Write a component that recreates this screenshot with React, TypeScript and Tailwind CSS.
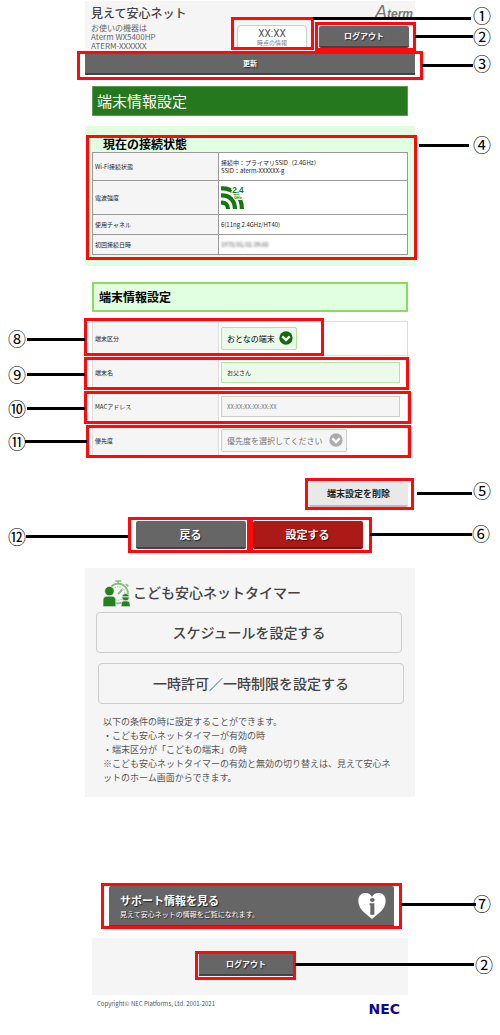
import { useState } from "react";
import type { ReactNode } from "react";

interface CalloutProps {
  mark: string;
  box: string;
  line: string;
  label: string;
}

interface StatusRow {
  name: string;
  height: string;
  value: ReactNode;
}

function Callout({ mark, box, line, label }: CalloutProps) {
  return (
    <div className="pointer-events-none">
      <div className={`absolute border-3 border-[#ff0a0a] ${box}`} />
      <div className={`absolute h-[3px] bg-black ${line}`} />
      <span
        className={`absolute w-[18px] text-center text-[18px] leading-4 text-black ${label}`}
      >
        {mark}
      </span>
    </div>
  );
}

function SignalIcon() {
  return (
    <svg
      width="23"
      height="23"
      viewBox="0 0 66 66"
      className="overflow-visible font-['Liberation_Sans',sans-serif] font-bold"
      role="img"
      aria-label="2.4GHz"
    >
      <g fill="none" stroke="#14780f" strokeWidth="12">
        <path d="M0 7C32 5 60 28 60 66" />
        <path d="M0 27C25 26 40 42 40 66" />
        <path d="M0 48C14 47 20 54 20 66" />
      </g>
      <g fill="#14780f" stroke="#fff" paintOrder="stroke">
        <text x="32" y="20" fontSize="24" strokeWidth="7">
          2.4
        </text>
        <text x="37" y="36" fontSize="11" strokeWidth="4">
          GHz
        </text>
      </g>
    </svg>
  );
}

function TimerIcon() {
  return (
    <svg width="27" height="27" viewBox="0 0 80 80" aria-hidden="true">
      <g fill="none" stroke="#84be82" strokeWidth="5">
        <circle cx="45" cy="40" r="29" />
        <circle cx="45" cy="40" r="20" strokeWidth="3" strokeDasharray="3 4" />
        <path d="M36 3h18M45 3v9M68 12l7 7" />
        <path d="M45 42l12-14" strokeWidth="6" />
      </g>
      <g fill="#26801f" stroke="#f5f5f5" strokeWidth="2">
        <circle cx="19" cy="33" r="14" />
        <path d="M0 79V59q0-11 11-11h16q11 0 11 11v20z" />
        <circle cx="67" cy="51" r="11" />
        <path d="M54 79v-8q0-9 9-9h8q9 0 9 9v8z" />
      </g>
      <path d="M55 50h25" stroke="#f5f5f5" strokeWidth="3" />
    </svg>
  );
}

function HeartInfoIcon() {
  return (
    <svg width="28" height="26" viewBox="0 0 84 78" aria-hidden="true">
      <path
        fill="#fff"
        d="M42 78C30 66 1 52 1 24C1 8 11 0 22 0c10 0 17 5 20 12C45 5 52 0 62 0c11 0 21 8 21 24C83 52 54 66 42 78z"
      />
      <g fill="#666">
        <ellipse cx="43" cy="21" rx="7" ry="6" />
        <path d="M35 31h14v34H37V37h-2z" />
      </g>
    </svg>
  );
}

function ChevronBadge({ color }: { color: string }) {
  return (
    <svg
      width="14"
      height="14"
      viewBox="0 0 42 42"
      className={`pointer-events-none absolute top-1 right-1 ${color}`}
      aria-hidden="true"
    >
      <circle cx="21" cy="21" r="20" fill="currentColor" />
      <path d="M10 16l11 11 11-11" fill="none" stroke="#fff" strokeWidth="7" />
    </svg>
  );
}

const statusRows: StatusRow[] = [
  {
    name: "Wi-Fi接続状態",
    height: "h-7",
    value: (
      <>
        接続中：プライマリSSID（2.4GHz）
        <br />
        SSID：aterm-XXXXXX-g
      </>
    ),
  },
  { name: "電波強度", height: "h-[34px]", value: <SignalIcon /> },
  { name: "使用チャネル", height: "h-5", value: "6(11ng 2.4GHz/HT40)" },
  {
    name: "初回接続日時",
    height: "h-5",
    value: <span className="text-[#555] blur-[1px]">1970/01/01 09:00</span>,
  },
];

const formHead =
  "w-[126px] border border-[#ddd] bg-[#f5f5f5] px-[2px] text-left font-normal";
const formCell = "border border-[#ddd] px-[2px]";
const darkButton =
  "border-b-2 border-[#444] bg-[#666] font-bold text-white text-shadow-[1px_1px_1px_#222]";

export default function App() {
  const [deviceType, setDeviceType] = useState("おとなの端末");
  const [deviceName, setDeviceName] = useState("お父さん");

  return (
    <div className="min-h-[1035px] bg-white font-['Noto_Sans_CJK_JP','Noto_Sans',sans-serif] text-[#222]">
      <header className="relative px-[85px] pt-px">
        <div className="flex h-[53px] bg-[#f5f5f5] px-[6px]">
          <div className="flex-1 pt-1 text-[8px] leading-[9px] text-[#666]">
            <h1 className="mb-[2px] text-[12px] leading-4 font-medium text-[#444]">
              見えて安心ネット
            </h1>
            <p>お使いの機器は</p>
            <p>Aterm WX5400HP</p>
            <p>ATERM-XXXXXX</p>
          </div>
          <div className="mt-6 mr-3 h-[23px] w-[70px] rounded-t border border-[#ccc] bg-white pt-[3px] text-center">
            <p className="font-[Roboto,sans-serif] text-[10px] leading-[10px] text-[#555]">
              XX:XX
            </p>
            <p className="text-[6px] leading-[8px] text-[#777]">時点の情報</p>
          </div>
          <div className="w-[90px]">
            <p className="-mr-1 h-[25px] text-right font-['Liberation_Sans',sans-serif] text-[12px] leading-[23px] font-bold text-[#777] italic">
              <span className="text-[18px] font-normal">A</span>term
            </p>
            <button
              type="button"
              className={`block h-[22px] w-full rounded-xs text-[8px] ${darkButton}`}
            >
              ログアウト
            </button>
          </div>
        </div>
        <button
          type="button"
          className={`block h-[21px] w-full text-[7px] ${darkButton}`}
        >
          更新
        </button>
        <Callout
          mark="①"
          box="top-[17px] right-[186px] h-[33px] w-[83px]"
          line="top-[17px] right-[29px] w-[158px]"
          label="top-[7px] right-[9px]"
        />
        <Callout
          mark="②"
          box="top-[22px] right-[84px] h-[29px] w-[101px]"
          line="top-[35px] right-[27px] w-[58px]"
          label="top-[28px] right-[9px]"
        />
        <Callout
          mark="③"
          box="inset-x-[77px] top-[51px] h-[29px]"
          line="top-[64px] right-[27px] w-[51px]"
          label="top-[55px] right-[9px]"
        />
      </header>

      <main>
        <div className="mt-[11px] px-[92px]">
          <h2 className="h-[30px] border border-[#5a9a55] bg-[#26781e] px-1 text-[15px] leading-7 text-white">
            端末情報設定
          </h2>
        </div>

        <section className="relative mt-[10px] px-[85px]">
          <div className="bg-[#e1ffe1] px-[7px] pt-[10px] pb-[11px]">
            <h3 className="h-4 pl-[11px] text-[12px] leading-4 font-bold text-black">
              現在の接続状態
            </h3>
            <table className="w-full border-collapse bg-white text-[6px] leading-2">
              <tbody>
                {statusRows.map((row) => (
                  <tr key={row.name} className={row.height}>
                    <th className="w-[126px] border border-[#999] bg-[#f5f5f5] px-[2px] text-left font-normal">
                      {row.name}
                    </th>
                    <td className="border border-[#999] px-[2px]">{row.value}</td>
                  </tr>
                ))}
              </tbody>
            </table>
          </div>
          <Callout
            mark="④"
            box="top-[9px] right-[83px] left-[86px] h-[125px]"
            line="top-[18px] right-[31px] w-[50px]"
            label="top-[10px] right-[9px]"
          />
        </section>

        <div className="mt-4 px-[92px]">
          <h3 className="h-[30px] border-2 border-[#8bdc5a] bg-[#e1ffe1] px-[5px] text-[12px] leading-[26px] font-bold text-black">
            端末情報設定
          </h3>
        </div>

        <section className="relative mt-[9px] px-[92px]">
          <table className="w-full border-collapse text-[6px] leading-2">
            <tbody>
              <tr className="h-[34px]">
                <th className={formHead}>
                  <label htmlFor="device-type">端末区分</label>
                </th>
                <td className={formCell}>
                  <div className="relative w-[76px]">
                    <select
                      id="device-type"
                      value={deviceType}
                      onChange={(e) => setDeviceType(e.target.value)}
                      className="block h-[23px] w-full appearance-none rounded-xs border border-[#b4e698] bg-[#edf9ea] pl-[5px] text-[8px] text-black"
                    >
                      <option>おとなの端末</option>
                      <option>こどもの端末</option>
                    </select>
                    <ChevronBadge color="text-[#14690f]" />
                  </div>
                </td>
              </tr>
              <tr className="h-[34px]">
                <th className={formHead}>
                  <label htmlFor="device-name">端末名</label>
                </th>
                <td className={formCell}>
                  <input
                    id="device-name"
                    type="text"
                    value={deviceName}
                    onChange={(e) => setDeviceName(e.target.value)}
                    className="block h-[21px] w-[179px] border border-[#b4e698] bg-[#edf9ea] px-[5px] text-[6px]"
                  />
                </td>
              </tr>
              <tr className="h-[34px]">
                <th className={formHead}>
                  <label htmlFor="mac-address">MACアドレス</label>
                </th>
                <td className={formCell}>
                  <input
                    id="mac-address"
                    type="text"
                    disabled
                    value="XX:XX:XX:XX:XX:XX"
                    className="block h-[21px] w-[179px] border border-[#ccc] bg-[#f5f5f5] px-[5px] text-[6px] text-[#777]"
                  />
                </td>
              </tr>
              <tr className="h-[34px]">
                <th className={formHead}>
                  <label htmlFor="priority">優先度</label>
                </th>
                <td className={formCell}>
                  <div className="relative w-[126px]">
                    <select
                      id="priority"
                      disabled
                      className="block h-[23px] w-full appearance-none rounded-xs border border-[#ccc] bg-[#f5f5f5] pl-[5px] text-[8px] text-[#777] opacity-100"
                    >
                      <option>優先度を選択してください</option>
                    </select>
                    <ChevronBadge color="text-[#aaa]" />
                  </div>
                </td>
              </tr>
            </tbody>
          </table>
          <Callout
            mark="⑧"
            box="-top-[3px] left-[84px] h-[38px] w-[240px]"
            line="top-[17px] left-[27px] w-[58px]"
            label="top-[9px] left-2"
          />
          <Callout
            mark="⑨"
            box="top-9 right-[91px] left-[84px] h-[33px]"
            line="top-[52px] left-[27px] w-[58px]"
            label="top-[45px] left-2"
          />
          <Callout
            mark="⑩"
            box="top-[70px] right-[89px] left-[84px] h-[33px]"
            line="top-[86px] left-[27px] w-[58px]"
            label="top-[79px] left-2"
          />
          <Callout
            mark="⑪"
            box="top-[104px] right-[89px] left-[86px] h-[33px]"
            line="top-[119px] left-[25px] w-[62px]"
            label="top-[112px] left-2"
          />
        </section>

        <div className="relative mt-6 flex justify-end px-[92px]">
          <button
            type="button"
            className="h-[25px] w-[99px] rounded-xs border-b-2 border-[#bbb] bg-[#e9e9e9] text-[9px] font-bold text-[#222]"
          >
            端末設定を削除
          </button>
          <Callout
            mark="⑤"
            box="-top-1 right-[86px] h-8 w-[109px]"
            line="top-[10px] right-7 w-[55px]"
            label="top-0 right-[9px]"
          />
        </div>

        <div className="relative mt-[14px] flex justify-center gap-[7px] pl-3">
          <button
            type="button"
            className={`h-7 w-[110px] rounded-xs text-[11px] ${darkButton}`}
          >
            戻る
          </button>
          <button
            type="button"
            className="h-7 w-[110px] rounded-xs border-b-2 border-[#7c1010] bg-[#ac1a17] text-[11px] font-bold text-white text-shadow-[1px_1px_1px_#500]"
          >
            設定する
          </button>
          <Callout
            mark="⑫"
            box="-top-1 right-1/2 h-9 w-[122px]"
            line="top-[14px] right-[372px] left-[26px]"
            label="top-[7px] left-2"
          />
          <Callout
            mark="⑥"
            box="-top-1 left-1/2 h-9 w-[122px]"
            line="top-3 right-7 left-[370px]"
            label="top-1 right-[10px]"
          />
        </div>

        <section className="mt-[19px] px-[85px]">
          <div className="bg-[#f5f5f5] px-[11px] pt-3 pb-3">
            <h3 className="flex h-8 items-start gap-[3px] pl-[7px] text-[14px] leading-6 font-medium text-[#444]">
              <TimerIcon />
              こども安心ネットタイマー
            </h3>
            <div className="flex flex-col gap-[10px] text-[14px] font-medium text-[#444]">
              <button
                type="button"
                className="h-[41px] w-[306px] rounded-sm border border-[#ccc]"
              >
                スケジュールを設定する
              </button>
              <button
                type="button"
                className="h-[41px] w-[306px] self-end rounded-sm border border-[#ccc]"
              >
                一時許可／一時制限を設定する
              </button>
            </div>
            <div className="mt-[11px] px-[7px] text-[9px] leading-[14px] text-[#555]">
              <p>以下の条件の時に設定することができます。</p>
              <p>・こども安心ネットタイマーが有効の時</p>
              <p>・端末区分が「こどもの端末」の時</p>
              <p>
                ※こども安心ネットタイマーの有効と無効の切り替えは、見えて安心ネットのホーム画面からできます。
              </p>
            </div>
          </div>
        </section>

        <div className="relative mt-[89px] pr-[106px] pl-[109px]">
          <button
            type="button"
            className={`flex h-[41px] w-full items-center justify-between rounded-xs pr-2 pl-[11px] text-left ${darkButton}`}
          >
            <span>
              <span className="block text-[11px] leading-4">サポート情報を見る</span>
              <span className="block text-[7px] leading-3 font-normal">
                見えて安心ネットの情報をご覧になれます。
              </span>
            </span>
            <HeartInfoIcon />
          </button>
          <Callout
            mark="⑦"
            box="-top-[3px] right-[98px] left-[101px] h-[46px]"
            line="top-[17px] right-6 w-[75px]"
            label="top-[9px] right-[9px]"
          />
        </div>
      </main>

      <footer>
        <div className="relative mt-[11px] px-[92px]">
          <div className="flex h-[57px] items-start justify-center bg-[#f5f5f5] pt-4 pr-2">
            <button
              type="button"
              className={`h-[22px] w-[95px] text-[8px] ${darkButton}`}
            >
              ログアウト
            </button>
          </div>
          <Callout
            mark="②"
            box="top-[13px] right-[204px] h-[29px] w-[101px]"
            line="top-[25px] right-[26px] w-[179px]"
            label="top-[18px] right-[7px]"
          />
        </div>
        <div className="flex justify-between pt-1 pr-[100px] pl-[97px]">
          <p className="text-[6px] leading-[10px] text-[#555]">
            Copyright© NEC Platforms, Ltd. 2001-2021
          </p>
          <p className="pt-[3px] font-['DejaVu_Sans',sans-serif] text-[14px] leading-[14px] font-bold text-[#0a0a96]">
            NEC
          </p>
        </div>
      </footer>
    </div>
  );
}
